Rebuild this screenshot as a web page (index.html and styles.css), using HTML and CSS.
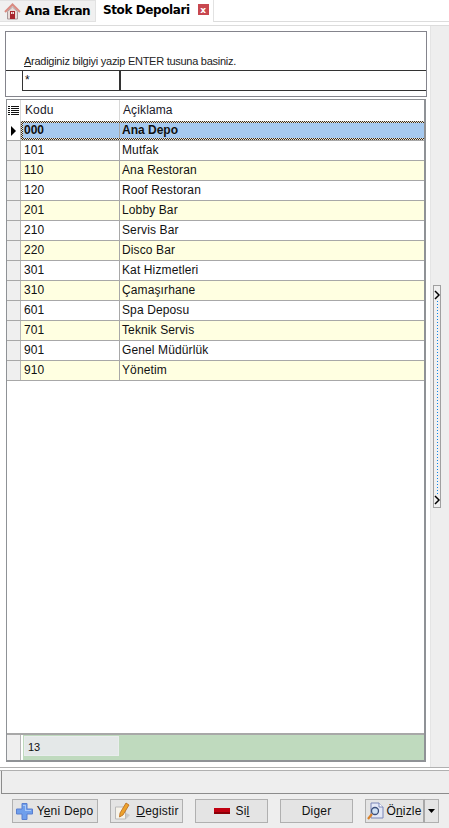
FILE: index.html
```html
<!DOCTYPE html>
<html lang="tr">
<head>
<meta charset="utf-8">
<title>Stok Depolari</title>
<link rel="stylesheet" href="styles.css">
</head>
<body>
<div class="tabbar">
  <div class="tab tab-home">
    <svg class="home-icon" width="17" height="17" viewBox="0 0 17 17"><path d="M1 9 8.500 1.500 16 9" fill="none" stroke="#d98a80" stroke-width="2"/><path d="M3.500 8.500 8.500 4l5 4.500V16h-10z" fill="#e9dcd8" stroke="#a9989a"/><rect x="6" y="8" width="5" height="8" fill="#a8242c"/><rect x="7" y="9" width="1.500" height="2" fill="#f2e4e0"/><rect x="9" y="9" width="1" height="2" fill="#f2e4e0"/></svg>
    <span>Ana Ekran</span>
  </div>
  <div class="tab tab-active">
    <span>Stok Depolari</span>
    <span class="close">x</span>
  </div>
  <div class="tab-rest"></div>
</div>
<div class="gap-line"></div>
<div class="main">
  <div class="panel">
    <div class="search">
      <div class="search-hint"><u>A</u>radiginiz bilgiyi yazip ENTER tusuna basiniz.</div>
      <div class="search-inputs">
        <div class="search-code">*</div>
        <div class="search-name"></div>
      </div>
    </div>
    <div class="grid">
      <div class="row row-head">
        <div class="ind"><svg width="11" height="11" viewBox="0 0 11 11"><path d="M0 1.500h2M3 1.500h8M0 3.500h2M3 3.500h8M0 5.500h2M3 5.500h8M0 7.500h2M3 7.500h8M0 9.500h2M3 9.500h8" stroke="#111" stroke-width="1"/></svg></div>
        <div class="code">Kodu</div>
        <div class="name">Açiklama</div>
      </div>
      <div class="row row-sel">
        <div class="ind"><svg width="7" height="10" viewBox="0 0 7 10"><path d="M1 0l5 5-5 5z" fill="#000"/></svg></div>
        <div class="code">000</div>
        <div class="name">Ana Depo</div>
      </div>
      <div class="row"><div class="ind"></div><div class="code">101</div><div class="name">Mutfak</div></div>
      <div class="row row-alt"><div class="ind"></div><div class="code">110</div><div class="name">Ana Restoran</div></div>
      <div class="row"><div class="ind"></div><div class="code">120</div><div class="name">Roof Restoran</div></div>
      <div class="row row-alt"><div class="ind"></div><div class="code">201</div><div class="name">Lobby Bar</div></div>
      <div class="row"><div class="ind"></div><div class="code">210</div><div class="name">Servis Bar</div></div>
      <div class="row row-alt"><div class="ind"></div><div class="code">220</div><div class="name">Disco Bar</div></div>
      <div class="row"><div class="ind"></div><div class="code">301</div><div class="name">Kat Hizmetleri</div></div>
      <div class="row row-alt"><div class="ind"></div><div class="code">310</div><div class="name">Çamaşırhane</div></div>
      <div class="row"><div class="ind"></div><div class="code">601</div><div class="name">Spa Deposu</div></div>
      <div class="row row-alt"><div class="ind"></div><div class="code">701</div><div class="name">Teknik Servis</div></div>
      <div class="row"><div class="ind"></div><div class="code">901</div><div class="name">Genel Müdürlük</div></div>
      <div class="row row-alt"><div class="ind"></div><div class="code">910</div><div class="name">Yönetim</div></div>
      <div class="grid-fill"></div>
      <div class="grid-foot">
        <div class="foot-ind"></div>
        <div class="foot-bar"><div class="foot-count">13</div></div>
      </div>
    </div>
  </div>
  <div class="side">
    <div class="splitter">
      <svg width="6" height="10" viewBox="0 0 6 10"><path d="M1 1l4 4-4 4" fill="none" stroke="#000" stroke-width="1.500"/></svg>
      <div class="splitter-dots"></div>
      <svg width="6" height="10" viewBox="0 0 6 10"><path d="M1 1l4 4-4 4" fill="none" stroke="#000" stroke-width="1.500"/></svg>
    </div>
  </div>
</div>
<div class="status-lines"></div>
<div class="status"></div>
<div class="actions">
  <button class="btn btn-new">
    <svg width="17" height="17" viewBox="0 0 17 17"><path d="M6 .5h5v5.500h5.500v5H11v5.500H6V11H.5V6H6z" fill="#6f9fec" stroke="#5a7fd0"/><path d="M7 2h3v5h5v1H9V3H7z" fill="#a9c8f6"/></svg>
    <span>Y<u>e</u>ni Depo</span>
  </button>
  <button class="btn btn-std btn-edit">
    <svg width="18" height="18" viewBox="0 0 18 18"><path d="M1.500 5h10v12h-10z" fill="#f6f3ea" stroke="#b9b9b9"/><path d="M12 1l3 2-6 10-3.500 2 .5-4z" fill="#eda22c" stroke="#b8691c" stroke-width=".8"/><path d="M12 17l4-4-4-2z" fill="#c8c8c8"/></svg>
    <span><u>D</u>egistir</span>
  </button>
  <button class="btn btn-std btn-del">
    <svg width="16" height="6" viewBox="0 0 16 6"><rect width="16" height="6" fill="#c00010"/><rect x="0" y="4" width="16" height="2" fill="#8a0008"/></svg>
    <span>Si<u>l</u></span>
  </button>
  <button class="btn btn-std btn-other">
    <span>Di<u>g</u>er</span>
  </button>
  <div class="btn-split">
    <button class="btn btn-preview">
      <svg width="17" height="18" viewBox="0 0 17 18"><path d="M4 1h8l4 4v11H4z" fill="#e4e8f6" stroke="#7a86b8"/><path d="M12 1v4h4" fill="#fff" stroke="#7a86b8"/><circle cx="8" cy="9" r="3.500" fill="#cfe0f4" stroke="#3c4f7c" stroke-width="1.300"/><path d="M5 12 1 17" stroke="#d9822b" stroke-width="2.200"/></svg>
      <span>Ö<u>n</u>izle</span>
    </button>
    <button class="btn btn-arrow"><svg width="7" height="4" viewBox="0 0 7 4"><path d="M0 0h7L3.500 4z" fill="#000"/></svg></button>
  </div>
</div>
</body>
</html>
```
FILE: styles.css
```css
* { box-sizing: border-box; }
html, body { margin: 0; padding: 0; }
body {
  width: 449px;
  height: 828px;
  overflow: hidden;
  background: #eeeeee;
  font-family: "Liberation Sans", Arial, sans-serif;
  font-size: 12px;
  color: #111;
}
u { text-underline-offset: 1px; }

.tabbar { display: flex; height: 22px; background: #fff; }
.tab { display: flex; align-items: center; height: 22px; font-family: "DejaVu Sans", sans-serif; font-weight: 700; font-size: 12px; letter-spacing: -0.4px; color: #000; }
.tab-home { width: 96px; background: #f0f0f0; border: 1px solid #e2e2e2; border-left: 0; padding-left: 4px; gap: 4px; }
.tab-active { width: 117px; background: #fff; padding: 0 0 3px 7px; gap: 8px; }
.tab-rest { flex: 1; border-left: 1px solid #e2e2e2; border-bottom: 1px solid #dcdcdc; }
.close { display: flex; align-items: center; justify-content: center; width: 11px; height: 11px; background: #c8474f; color: #fff; font-size: 9px; line-height: 10px; letter-spacing: 0; }
.gap-line { height: 4px; background: #fff; border-bottom: 1px solid #dcdcdc; }

.main { display: flex; height: 741px; }
.panel { width: 431px; background: #fff; border-right: 1px solid #e4e4e4; padding: 5px 0 0 5px; display: flex; flex-direction: column; }
.search { width: 422px; height: 66px; border: 1px solid #84848c; display: flex; flex-direction: column; }
.search-hint { height: 39px; padding: 22px 0 0 18px; line-height: 14px; font-size: 11px; border-bottom: 1px solid #333; color: #222; letter-spacing: -0.27px; }
.search-inputs { display: flex; height: 20px; margin-left: 16px; border-left: 1px solid #333; border-bottom: 1px solid #333; }
.search-code { width: 98px; border-right: 2px solid #333; padding: 2px 0 0 2px; line-height: 14px; }
.search-name { flex: 1; }

.grid { width: 420px; height: 663px; margin: 2px 0 0 1px; border: 1px solid #8f9296; border-width: 1px 2px 2px 1px; display: flex; flex-direction: column; background: #fff; }
.row { display: flex; height: 20px; border-bottom: 1px solid #a8a8a8; background: #fff; line-height: 19px; letter-spacing: 0.12px; flex: none; }
.row-head { height: 21px; line-height: 21px; color: #1a1a2a; border-bottom: 0; }
.row-alt { background: #ffffe1; }
.row-sel { position: relative; background: #a6c9ef; font-weight: 700; letter-spacing: 0; }
.row-sel::after {
  content: "";
  position: absolute;
  inset: 0 0 0 14px;
  padding: 2px 0 2px 2px;
  background: repeating-conic-gradient(#3a2c1c 0 25%, #e8e4d8 0 50%) 0 0 / 2px 2px;
  -webkit-mask: linear-gradient(#000 0 0) content-box, linear-gradient(#000 0 0);
  -webkit-mask-composite: xor;
  mask-composite: exclude;
}
.row-sel .ind { background: #fff; }
.ind { flex: none; width: 14px; background: #efefef; border-right: 1px solid #b8b8b8; display: flex; align-items: center; justify-content: center; }
.row-head .ind { background: #fff; border-right: 1px solid #d8d8d8; }
.code { flex: none; width: 99px; padding-left: 3px; border-right: 1px solid #a8a8a8; }
.name { flex: 1; padding-left: 2px; }
.row-head .code { padding-left: 4px; border-right-color: #d8d8d8; }
.row-head .name { padding-left: 3px; }
.grid-fill { flex: 1; }
.grid-foot { display: flex; flex: none; height: 27px; border-top: 2px solid #a8a8a8; }
.foot-ind { width: 14px; background: #efefef; border-right: 1px solid #b8b8b8; }
.foot-bar { flex: 1; margin-left: 2px; background: #bfdabe; padding: 1px 0 1px 1px; }
.foot-count { width: 95px; height: 20px; background: #e4e8e8; border: 1px solid #e9eded; padding-left: 3px; line-height: 20px; font-size: 11px; }

.side { width: 18px; padding: 259px 0 0 2px; }
.splitter { width: 8px; height: 223px; border: 1px solid #a0a0a0; background: #f0f0f0; display: flex; flex-direction: column; align-items: center; justify-content: space-between; padding: 4px 0 2px; }
.splitter-dots { flex: 1; width: 1px; margin: 1px 0; background: repeating-linear-gradient(to bottom, #0a84e8 0 1px, transparent 1px 3px); }

.status-lines { height: 4px; border-top: 1px solid #b0b0b0; border-bottom: 1px solid #b0b0b0; background: #fff; }
.status { height: 23px; margin-left: 1px; border: 1px solid #8c8c8c; border-right: 0; border-top: 0; background: #eeeeee; }

.actions { display: flex; align-items: center; padding: 5px 0 0 12px; }
.btn { display: flex; align-items: center; justify-content: center; height: 24px; padding: 0; border: 1px solid #b0b0b0; background: #e4e4e4; font-family: "Liberation Sans", Arial, sans-serif; font-size: 12px; color: #111; letter-spacing: 0.2px; }
.btn-new { width: 86px; gap: 4px; padding-right: 1px; }
.btn-std { width: 73px; }
.btn-edit { gap: 4px; margin-left: 12px; margin-right: 12px; }
.btn-del { gap: 6px; margin-right: 12px; }
.btn-other { margin-right: 12px; }
.btn-split { display: flex; }
.btn-preview { width: 60px; gap: 2px; border-right: 2px solid #a8a8a8; }
.btn-arrow { width: 14px; border-left: 0; }
```
